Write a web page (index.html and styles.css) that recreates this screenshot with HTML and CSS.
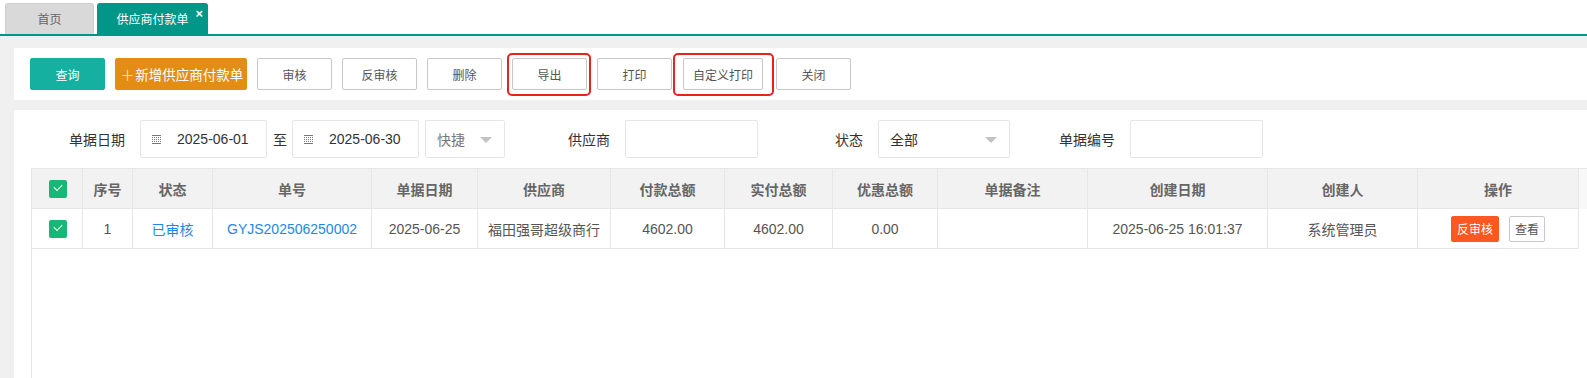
FILE: index.html
```html
<!DOCTYPE html>
<html lang="zh-CN">
<head>
    <meta charset="UTF-8">
    <meta name="viewport" content="width=device-width, initial-scale=1.0">
    <title>供应商付款单</title>
    <link rel="stylesheet" href="styles.css">
</head>
<body>
    <div class="tabbar">
        <div class="tab">首页</div>
        <div class="tab tab-active">供应商付款单<span class="tab-close">×</span></div>
    </div>

    <div class="main">
        <div class="panel toolbar">
            <button class="btn btn-teal">查询</button>
            <button class="btn btn-orange"><span class="plus">＋</span>新增供应商付款单</button>
            <button class="btn">审核</button>
            <button class="btn">反审核</button>
            <button class="btn">删除</button>
            <span class="mark mark-a"><button class="btn">导出</button></span>
            <button class="btn">打印</button>
            <span class="mark mark-b"><button class="btn btn-wide">自定义打印</button></span>
            <button class="btn btn-last">关闭</button>
        </div>

        <div class="panel search">
            <div class="filter-row">
                <label class="form-label">单据日期</label>
                <div class="input date-input">
                    <svg class="cal-icon" width="9" height="9" viewBox="0 0 9 9">
                        <rect x="0" y="0" width="9" height="1" fill="#777"/>
                        <rect x="0" y="2" width="1" height="1" fill="#777"/><rect x="2" y="2" width="1" height="1" fill="#777"/><rect x="4" y="2" width="1" height="1" fill="#777"/><rect x="6" y="2" width="1" height="1" fill="#777"/><rect x="8" y="2" width="1" height="1" fill="#777"/>
                        <rect x="0" y="4" width="1" height="1" fill="#777"/><rect x="2" y="4" width="1" height="1" fill="#777"/><rect x="4" y="4" width="1" height="1" fill="#777"/><rect x="6" y="4" width="1" height="1" fill="#777"/><rect x="8" y="4" width="1" height="1" fill="#777"/>
                        <rect x="0" y="6" width="1" height="1" fill="#777"/><rect x="2" y="6" width="1" height="1" fill="#777"/><rect x="4" y="6" width="1" height="1" fill="#777"/><rect x="6" y="6" width="1" height="1" fill="#777"/><rect x="8" y="6" width="1" height="1" fill="#777"/>
                        <rect x="0" y="8" width="9" height="1" fill="#777"/>
                    </svg>
                    <span>2025-06-01</span>
                </div>
                <span class="to">至</span>
                <div class="input date-input date-end">
                    <svg class="cal-icon" width="9" height="9" viewBox="0 0 9 9">
                        <rect x="0" y="0" width="9" height="1" fill="#777"/>
                        <rect x="0" y="2" width="1" height="1" fill="#777"/><rect x="2" y="2" width="1" height="1" fill="#777"/><rect x="4" y="2" width="1" height="1" fill="#777"/><rect x="6" y="2" width="1" height="1" fill="#777"/><rect x="8" y="2" width="1" height="1" fill="#777"/>
                        <rect x="0" y="4" width="1" height="1" fill="#777"/><rect x="2" y="4" width="1" height="1" fill="#777"/><rect x="4" y="4" width="1" height="1" fill="#777"/><rect x="6" y="4" width="1" height="1" fill="#777"/><rect x="8" y="4" width="1" height="1" fill="#777"/>
                        <rect x="0" y="6" width="1" height="1" fill="#777"/><rect x="2" y="6" width="1" height="1" fill="#777"/><rect x="4" y="6" width="1" height="1" fill="#777"/><rect x="6" y="6" width="1" height="1" fill="#777"/><rect x="8" y="6" width="1" height="1" fill="#777"/>
                        <rect x="0" y="8" width="9" height="1" fill="#777"/>
                    </svg>
                    <span>2025-06-30</span>
                </div>
                <div class="input select quick">
                    <span class="placeholder">快捷</span>
                    <i class="caret"></i>
                </div>

                <label class="form-label">供应商</label>
                <div class="input text-input"></div>

                <label class="form-label">状态</label>
                <div class="input select status">
                    <span>全部</span>
                    <i class="caret"></i>
                </div>

                <label class="form-label">单据编号</label>
                <div class="input text-input"></div>
            </div>

            <div class="table-box">
                <div class="grid-row head">
                    <div class="cell"><span class="checkbox"></span></div>
                    <div class="cell">序号</div>
                    <div class="cell">状态</div>
                    <div class="cell">单号</div>
                    <div class="cell">单据日期</div>
                    <div class="cell">供应商</div>
                    <div class="cell">付款总额</div>
                    <div class="cell">实付总额</div>
                    <div class="cell">优惠总额</div>
                    <div class="cell">单据备注</div>
                    <div class="cell">创建日期</div>
                    <div class="cell">创建人</div>
                    <div class="cell">操作</div>
                    <div class="cell filler"></div>
                </div>
                <div class="grid-row body">
                    <div class="cell"><span class="checkbox"></span></div>
                    <div class="cell">1</div>
                    <div class="cell link">已审核</div>
                    <div class="cell link">GYJS202506250002</div>
                    <div class="cell">2025-06-25</div>
                    <div class="cell">福田强哥超级商行</div>
                    <div class="cell">4602.00</div>
                    <div class="cell">4602.00</div>
                    <div class="cell">0.00</div>
                    <div class="cell"></div>
                    <div class="cell">2025-06-25 16:01:37</div>
                    <div class="cell">系统管理员</div>
                    <div class="cell actions">
                        <button class="mini mini-danger">反审核</button>
                        <button class="mini">查看</button>
                    </div>
                    <div class="cell filler"></div>
                </div>
            </div>
        </div>
    </div>
</body>
</html>
```

FILE: styles.css
```css
body {
    margin: 0;
    font-family: "Liberation Sans", "Noto Sans CJK SC", sans-serif;
    font-size: 14px;
    color: #333;
    background-color: #f0f0f0;
    overflow: hidden;
}

/* tab bar */
.tabbar {
    display: flex;
    align-items: flex-end;
    height: 34px;
    padding-left: 5px;
    background-color: #fff;
    border-bottom: 2px solid #009688;
}

.tab {
    position: relative;
    box-sizing: border-box;
    width: 89px;
    height: 31px;
    margin-right: 3px;
    line-height: 33px;
    text-align: center;
    font-size: 12px;
    color: #666;
    background-color: #d9d9d9;
    border: 1px solid #cfcfcf;
    border-bottom: none;
    border-radius: 3px 3px 0 0;
}

.tab-active {
    width: 111px;
    color: #fff;
    background-color: #009688;
    border-color: #009688;
}

.tab-close {
    position: absolute;
    top: 3px;
    right: 4px;
    font-size: 13px;
    line-height: 13px;
    font-weight: bold;
    color: #fff;
}

/* content */
.main {
    padding: 12px 0 0 14px;
}

.panel {
    background-color: #fff;
}

.toolbar {
    display: flex;
    align-items: center;
    gap: 10px;
    padding: 10px 16px;
    margin-bottom: 10px;
}

.btn {
    box-sizing: border-box;
    width: 75px;
    height: 32px;
    padding: 0;
    font-family: inherit;
    font-size: 12px;
    color: #555;
    background-color: #fff;
    border: 1px solid #c9c9c9;
    border-radius: 2px;
}

.btn-teal {
    color: #fff;
    background-color: #16b0a0;
    border-color: #16b0a0;
}

.btn-orange {
    width: 132px;
    padding-left: 2px;
    font-size: 13.5px;
    color: #fff;
    background-color: #e38d15;
    border-color: #e38d15;
}

.plus {
    margin-right: 1px;
    color: rgba(255, 255, 255, 0.75);
}

.btn-wide {
    width: 80px;
}

.btn-last {
    margin-left: 3px;
}

.mark {
    position: relative;
    display: inline-flex;
}

.mark::after {
    content: "";
    position: absolute;
    border: 2px solid #e8231b;
    border-radius: 5px;
}

.mark-a::after {
    top: -5px;
    bottom: -6px;
    left: -5px;
    right: -4px;
}

.mark-b {
    margin-left: 1px;
}

.mark-b::after {
    top: -5px;
    bottom: -6px;
    left: -10px;
    right: -11px;
}

/* search form */
.search {
    padding: 10px 0 0 16px;
}

.filter-row {
    display: flex;
    align-items: center;
}

.form-label {
    box-sizing: border-box;
    width: 110px;
    padding-right: 15px;
    text-align: right;
    color: #333;
}

.input {
    box-sizing: border-box;
    height: 38px;
    margin-right: 10px;
    display: flex;
    align-items: center;
    position: relative;
    background-color: #fff;
    border: 1px solid #e6e6e6;
    border-radius: 2px;
}

.date-input {
    width: 127px;
    margin-right: 0;
    padding-left: 11px;
}

.date-end {
    margin-right: 6px;
}

.cal-icon {
    margin-right: 16px;
}

.to {
    margin: 0 5px 0 6px;
}

.select {
    padding-left: 11px;
}

.quick {
    width: 80px;
}

.status {
    width: 132px;
}

.placeholder {
    color: #777;
}

.caret {
    position: absolute;
    right: 12px;
    top: 16px;
    border-style: solid;
    border-width: 6px 6px 0 6px;
    border-color: #c2c2c2 transparent transparent transparent;
}

.text-input {
    width: 133px;
}

/* table */
.table-box {
    margin: 10px 0 0 1px;
    min-height: 209px;
    border-left: 1px solid #e6e6e6;
    border-top: 1px solid #e6e6e6;
}

.grid-row {
    display: grid;
    grid-template-columns: 51px 50px 80px 159px 106px 133px 114px 108px 105px 150px 180px 150px 161px 1fr;
}

.cell {
    box-sizing: border-box;
    height: 40px;
    display: flex;
    align-items: center;
    justify-content: center;
    border-right: 1px solid #e6e6e6;
    border-bottom: 1px solid #e6e6e6;
    white-space: nowrap;
    color: #555;
}

.head .cell {
    background-color: #f2f2f2;
    font-weight: bold;
    color: #666;
}

.head .filler {
    background-color: #f8f8f8;
    border: none;
}

.body .filler {
    border: none;
}

.checkbox {
    box-sizing: border-box;
    width: 18px;
    height: 18px;
    margin-left: 2px;
    border-radius: 2px;
    background-color: #16b777;
    position: relative;
}

.checkbox::after {
    content: "";
    position: absolute;
    left: 5px;
    top: 4px;
    width: 7px;
    height: 4px;
    border-left: 1px solid #fff;
    border-bottom: 1px solid #fff;
    transform: rotate(-45deg);
}

.link {
    color: #1e88e5;
}

.actions {
    gap: 10px;
}

.mini {
    box-sizing: border-box;
    height: 26px;
    padding: 0 5px;
    font-family: inherit;
    font-size: 12px;
    color: #555;
    background-color: #fff;
    border: 1px solid #c9c9c9;
    border-radius: 2px;
}

.mini-danger {
    width: 48px;
    color: #fff;
    background-color: #ff5722;
    border-color: #ff5722;
}
```
